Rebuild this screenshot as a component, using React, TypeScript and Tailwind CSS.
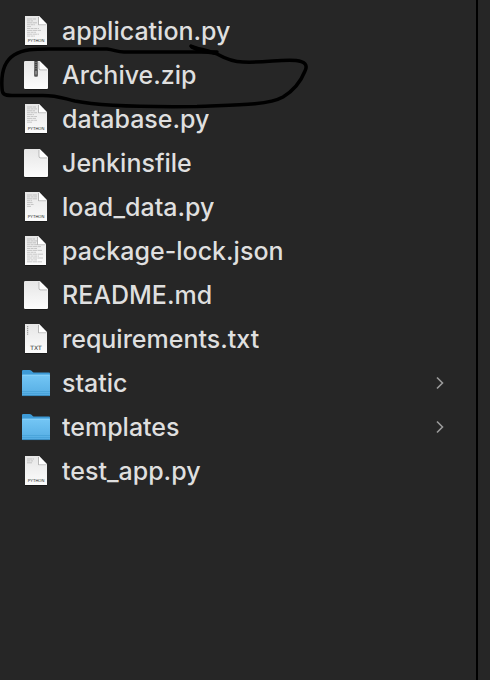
import type { ReactNode } from "react";

type Kind = "python" | "blank" | "zip" | "json" | "txt" | "folder";

interface Entry {
  name: string;
  kind: Kind;
  lines?: number[];
}

const entries: Entry[] = [
  { name: "application.py", kind: "python", lines: [9, 6, 10, 8, 4, 12, 14, 9, 12, 8] },
  { name: "Archive.zip", kind: "zip" },
  { name: "database.py", kind: "python", lines: [9, 10, 8, 10, 7, 10, 9, 10, 5] },
  { name: "Jenkinsfile", kind: "blank" },
  { name: "load_data.py", kind: "python", lines: [10, 11, 12, 5, 6, 7, 4] },
  { name: "package-lock.json", kind: "json", lines: [8, 11, 9, 11, 14, 10, 15, 9, 16, 12, 16, 10, 15] },
  { name: "README.md", kind: "blank" },
  { name: "requirements.txt", kind: "txt" },
  { name: "static", kind: "folder" },
  { name: "templates", kind: "folder" },
  { name: "test_app.py", kind: "python", lines: [7, 6, 5] },
];

function Gradients() {
  return (
    <svg className="absolute h-0 w-0" aria-hidden="true">
      <defs>
        <linearGradient id="paper" x1="0" y1="0" x2="0" y2="1">
          <stop offset="0" stopColor="#e6e6e6" />
          <stop offset="1" stopColor="#fcfcfc" />
        </linearGradient>
        <linearGradient id="folder" x1="0" y1="0" x2="0" y2="1">
          <stop offset="0" stopColor="#74c6f5" />
          <stop offset="1" stopColor="#55ade3" />
        </linearGradient>
      </defs>
    </svg>
  );
}

function IconFrame({ children }: { children: ReactNode }) {
  return (
    <svg viewBox="0 0 28 32" className="h-8 w-7 shrink-0" aria-hidden="true">
      {children}
    </svg>
  );
}

function CodeLines({ widths }: { widths: number[] }) {
  return (
    <g stroke="#909090" strokeWidth="0.8" opacity="0.55">
      {widths.map((w, i) => {
        const y = 4 + i * 1.9;
        const end = 5 + (y < 11 ? Math.min(w, 10) : w);
        return <path key={i} d={`M5 ${y}H${end}`} strokeDasharray={i % 2 ? "3 0.6" : "5 0.5"} />;
      })}
    </g>
  );
}

function FileIcon({ kind, lines = [] }: { kind: Kind; lines?: number[] }) {
  if (kind === "folder") {
    return (
      <IconFrame>
        <path d="M0 28.5V4Q0 3 1.2 3H7.5Q8.6 3 9.5 3.8L11 5.2Q11.5 5.6 12.4 5.6H27Q28 5.6 28 6.6V28.5Z" fill="#3d9ad6" />
        <path d="M0 8.3Q0 7.7 0.7 7.7H27.3Q28 7.7 28 8.3V28Q28 29 27 29H1Q0 29 0 28Z" fill="url(#folder)" />
        <path d="M0.3 8.2H27.7" stroke="#90d5fa" strokeWidth="0.8" />
        <path d="M0 24.5H28M0 26.5H28" stroke="#409cd3" strokeWidth="0.6" />
        <path d="M0.5 28.6H27.5" stroke="#307fb2" strokeWidth="0.8" />
      </IconFrame>
    );
  }

  if (kind === "blank" || kind === "zip") {
    return (
      <IconFrame>
        <path d="M3 30.5H25.5" stroke="#000" strokeWidth="1" opacity="0.35" />
        <path d="M3.2 2H17.7L26 10.2V28.8Q26 30 24.8 30H3.2Q2 30 2 28.8V3.2Q2 2 3.2 2Z" fill="url(#paper)" />
        <path d="M17 3V9.3Q17 10.9 18.6 10.9H25" stroke="#000" strokeWidth="1" opacity="0.22" fill="none" />
        <path d="M17.7 2L26 10.2H18.9Q17.7 10.2 17.7 9Z" fill="#fff" />
        {kind === "zip" && (
          <g>
            <path d="M12 2H16V16.5Q16 18 14 18Q12 18 12 16.5Z" fill="#777" />
            <path d="M14 2V11" stroke="#3c3c3c" strokeWidth="1.8" strokeDasharray="1.2 0.8" />
            <rect x="12.5" y="10.5" width="3" height="6.5" rx="1" fill="#555" />
            <path d="M14 12V15.5" stroke="#b5b5b5" strokeWidth="1" />
          </g>
        )}
      </IconFrame>
    );
  }

  const right = kind === "json" ? 24 : 25;
  return (
    <IconFrame>
      <path d={`M3 30.5H${right}`} stroke="#000" strokeWidth="1" opacity="0.35" />
      <path d={`M3 1H${right - 8}L${right} 9.2V30H3Z`} fill="url(#paper)" />
      {kind === "txt" ? (
        <path d="M5.7 3V12" stroke="#8c8c8c" strokeWidth="1" strokeDasharray="1.2 0.7" />
      ) : (
        <CodeLines widths={lines} />
      )}
      <path d={`M${right - 8.5} 2V9.7H${right - 1}`} stroke="#000" strokeWidth="1" opacity="0.22" fill="none" />
      <path d={`M${right - 8} 1L${right} 9.2H${right - 8}Z`} fill="#fff" />
      {kind === "python" && (
        <text x="14" y="27" textAnchor="middle" fill="#222" className="font-['Liberation_Sans',sans-serif] text-[4px]">
          PYTHON
        </text>
      )}
      {kind === "txt" && (
        <text x="14" y="27" textAnchor="middle" fill="#333" className="font-['DejaVu_Sans',sans-serif] text-[6px]">
          TXT
        </text>
      )}
    </IconFrame>
  );
}

function Chevron() {
  return (
    <svg viewBox="0 0 8 14" className="ml-auto h-3.5 w-2 shrink-0" fill="none" stroke="#9b9b9b" strokeWidth="1.6" aria-hidden="true">
      <path d="M1 1.5L6.5 7L1 12.5" />
    </svg>
  );
}

function HandDrawnLoop() {
  return (
    <svg
      viewBox="0 0 310 70"
      className="pointer-events-none absolute top-10 left-0 h-[70px] w-[310px]"
      fill="none"
      stroke="#000"
      strokeWidth="3.5"
      strokeLinecap="round"
      strokeLinejoin="round"
      aria-hidden="true"
    >
      <path d="M191 6C197 9 208 10 217 14C226 19 233 22 243 22C265 23 281 19 296 20.5C305 21.5 308 25 305 31C301 41 293 51 283 57C267 66 228 65 197 66.500C156 67 104 67 75 61C62 58 57 55.500 43 55.500H12C4 55.500 2 54 2 48C1 34 3 22 14 15C24 9 34 9 49 9H107C115 10 117 12 124 12H217" />
      <path d="M192 7L201 11L216 13" strokeWidth="4" />
    </svg>
  );
}

export default function App() {
  return (
    <main className="relative flex min-h-screen bg-[#262626] font-['Inter',sans-serif] text-[#dfdfdf]">
      <Gradients />
      <ul className="min-w-0 flex-1 border-r-2 border-black pt-[9px]">
        {entries.map((entry) => (
          <li key={entry.name}>
            <button type="button" className="flex h-11 w-full items-center gap-3 pr-8 pl-[22px] text-left text-[25px] leading-8 font-medium">
              <FileIcon kind={entry.kind} lines={entry.lines} />
              <span className="truncate">{entry.name}</span>
              {entry.kind === "folder" && <Chevron />}
            </button>
          </li>
        ))}
      </ul>
      <div className="w-3 shrink-0" />
      <HandDrawnLoop />
    </main>
  );
}
